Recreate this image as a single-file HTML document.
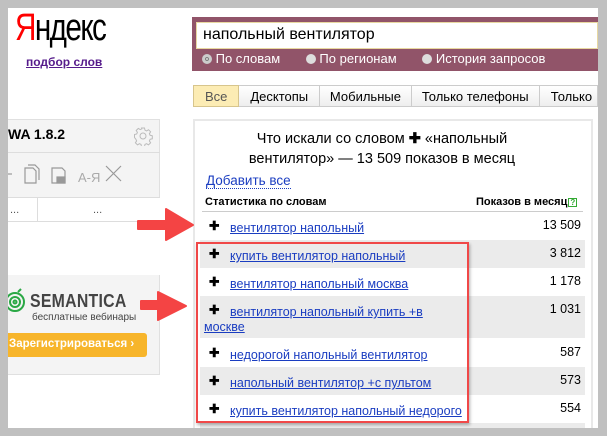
<!DOCTYPE html>
<html><head><meta charset="utf-8"><style>
*{margin:0;padding:0;box-sizing:border-box}
body{width:607px;height:436px;background:#c0c0c0;position:relative;overflow:hidden;font-family:"Liberation Sans",Arial,sans-serif;font-size:13px;color:#000}
.abs{position:absolute}
a{color:#1a3dc1;text-decoration:underline}
</style></head><body>
<div class="abs" style="left:8px;top:8px;width:590px;height:420px;background:#fff"></div>
<div class="abs" style="left:15px;top:7px;font-size:38px;letter-spacing:-2px;transform:scaleX(0.78);transform-origin:left"><span style="color:#f00">Я</span>ндекс</div>
<div class="abs" style="left:26px;top:55px;font-size:12px;font-weight:bold;color:#551a8b;text-decoration:underline">подбор слов</div>
<div class="abs" style="left:192px;top:17px;width:406px;height:54px;background:#915469"></div>
<div class="abs" style="left:196px;top:22px;width:402px;height:27px;background:#fff;border:1px solid #e8d8a0;font-size:16px;padding:3px 6px;color:#000">напольный вентилятор</div>
<div class="abs" style="left:202px;top:51px;color:#fff;font-size:13px;white-space:nowrap">
<span style="display:inline-block;width:10px;height:10px;border-radius:50%;background:#ddd;border:3px solid #ccc;box-shadow:inset 0 0 0 1px #777;vertical-align:-1px"></span> По словам
<span style="display:inline-block;width:10px;height:10px;border-radius:50%;background:#ddd;margin-left:22px;vertical-align:-1px"></span> По регионам
<span style="display:inline-block;width:10px;height:10px;border-radius:50%;background:#ddd;margin-left:22px;vertical-align:-1px"></span> История запросов</div>
<div class="abs" style="left:193px;top:85px;height:22px;display:flex;font-size:13px;white-space:nowrap;width:405px;overflow:hidden">
<div style="width:48px;background:#fcecb4;border:1px solid #d7c58c;text-align:center;padding-top:3px;color:#555">Все</div>
<div style="width:84px;background:linear-gradient(#fff,#eee);border:1px solid #ccc;border-left:0;text-align:center;padding-top:3px">Десктопы</div>
<div style="width:95px;background:linear-gradient(#fff,#eee);border:1px solid #ccc;border-left:0;text-align:center;padding-top:3px">Мобильные</div>
<div style="width:133px;background:linear-gradient(#fff,#eee);border:1px solid #ccc;border-left:0;text-align:center;padding-top:3px">Только телефоны</div>
<div style="width:60px;background:linear-gradient(#fff,#eee);border:1px solid #ccc;border-left:0;padding:3px 0 0 11px">Только</div></div>
<div class="abs" style="left:193px;top:119px;width:400px;height:315px;border:2px solid #e8e8e8;background:#fff"></div>
<div class="abs" style="left:196px;top:129px;width:394px;text-align:center;font-size:14.5px;line-height:20px;padding-right:22px">Что искали со словом <b>✚</b> «напольный<br>вентилятор» — 13 509 показов в месяц</div>
<div class="abs" style="left:206px;top:173px;font-size:13.5px;color:#1a3dc1;border-bottom:1px dotted #1a3dc1;line-height:15px">Добавить все</div>
<div class="abs" style="left:205px;top:196px;font-size:11px;font-weight:bold">Статистика по словам</div>
<div class="abs" style="left:476px;top:196px;font-size:11px;font-weight:bold">Показов в месяц<span style="display:inline-block;width:9px;height:9px;border:1px solid #3a3;color:#3a3;font-size:8px;line-height:8px;text-align:center;margin-left:1px">?</span></div>
<div class="abs" style="left:202px;top:211px;width:381px;height:1px;background:#ccc"></div>
<div class="abs" style="left:200px;top:212px;width:385px;font-size:12.5px">
<div style="height:28px;position:relative"><b class="abs" style="left:9px;top:6px">✚</b><a class="abs" style="left:30px;top:9px">вентилятор напольный</a><span class="abs" style="right:4px;top:6px">13 509</span></div>
<div style="height:28px;position:relative;background:#ebebeb"><b class="abs" style="left:9px;top:6px">✚</b><a class="abs" style="left:30px;top:9px">купить вентилятор напольный</a><span class="abs" style="right:4px;top:6px">3 812</span></div>
<div style="height:28px;position:relative"><b class="abs" style="left:9px;top:6px">✚</b><a class="abs" style="left:30px;top:9px">вентилятор напольный москва</a><span class="abs" style="right:4px;top:6px">1 178</span></div>
<div style="height:42px;position:relative;background:#ebebeb"><b class="abs" style="left:9px;top:6px">✚</b><a class="abs" style="left:4px;top:9px;text-indent:26px;width:240px;line-height:15px">вентилятор напольный купить +в москве</a><span class="abs" style="right:4px;top:6px">1 031</span></div>
<div style="height:29px;position:relative"><b class="abs" style="left:9px;top:7px">✚</b><a class="abs" style="left:30px;top:10px">недорогой напольный вентилятор</a><span class="abs" style="right:4px;top:7px">587</span></div>
<div style="height:28px;position:relative;background:#ebebeb"><b class="abs" style="left:9px;top:6px">✚</b><a class="abs" style="left:30px;top:9px">напольный вентилятор +с пультом</a><span class="abs" style="right:4px;top:6px">573</span></div>
<div style="height:28px;position:relative"><b class="abs" style="left:9px;top:6px">✚</b><a class="abs" style="left:30px;top:9px">купить вентилятор напольный недорого</a><span class="abs" style="right:4px;top:6px">554</span></div>
<div style="height:10px;background:#ebebeb"></div>
</div>
<div class="abs" style="left:196px;top:242px;width:273px;height:181px;border:2px solid #f04848;box-shadow:1px 2px 3px rgba(0,0,0,.3)"></div>
<div class="abs" style="left:8px;top:119px;width:152px;height:256px;background:#f4f4f4;border:1px solid #e0e0e0;border-left:0"></div>
<div class="abs" style="left:8px;top:126px;font-size:14px;font-weight:bold">WA 1.8.2</div>
<svg class="abs" style="left:133px;top:126px" width="20" height="20" viewBox="0 0 20 20" fill="none" stroke="#bbb" stroke-width="1"><path d="M8.5 2h3l.5 2.2 1.6.7 1.9-1.2 2.1 2.1-1.2 1.9.7 1.6 2.2.5v3l-2.2.5-.7 1.6 1.2 1.9-2.1 2.1-1.9-1.2-1.6.7-.5 2.2h-3l-.5-2.2-1.6-.7-1.9 1.2-2.1-2.1 1.2-1.9-.7-1.6L1.5 11.5v-3l2.2-.5.7-1.6-1.2-1.9 2.1-2.1 1.9 1.2 1.6-.7z"/><circle cx="10" cy="10" r="3"/></svg>
<div class="abs" style="left:8px;top:152px;width:152px;height:1px;background:#ddd"></div>
<svg class="abs" style="left:8px;top:160px" width="120" height="30" viewBox="0 0 120 30" fill="none" stroke="#999" stroke-width="1.2">
<path d="M0 14H4"/><path d="M17 8h8l3 3v12H17z"/><path d="M20 5h7l4 4v11"/><path d="M44 8h10l3 3v12H44z"/><rect x="49" y="17" width="8" height="6" fill="#999"/>
<text x="70" y="22" font-size="13" fill="#aaa" stroke="none" font-family="Liberation Sans">A-Я</text><path d="M98 6l15 15M113 6L98 21"/></svg>
<div class="abs" style="left:8px;top:197px;width:152px;height:25px;border-top:1px solid #ddd;border-bottom:1px solid #ddd;background:#fff"></div>
<div class="abs" style="left:37px;top:197px;width:1px;height:25px;background:#ddd"></div>
<div class="abs" style="left:10px;top:204px;color:#555;font-size:11px">...</div>
<div class="abs" style="left:93px;top:204px;color:#555;font-size:11px">...</div>
<div class="abs" style="left:8px;top:222px;width:152px;height:53px;background:#fff"></div>
<svg class="abs" style="left:5px;top:288px" width="20" height="26" viewBox="0 0 20 26" fill="none" stroke="#2aa845" stroke-width="2"><circle cx="10" cy="14" r="9"/><circle cx="10" cy="14" r="5"/><circle cx="10" cy="14" r="1.5"/><path d="M13 4l3-3"/></svg>
<div class="abs" style="left:30px;top:291px;font-size:18px;font-weight:bold;color:#444;letter-spacing:0.3px;transform:scaleX(0.88);transform-origin:left">SEMANTICA</div>
<div class="abs" style="left:32px;top:312px;font-size:10px;color:#444">бесплатные вебинары</div>
<div class="abs" style="left:8px;top:333px;width:139px;height:24px;background:#f7b52b;border-radius:0 3px 3px 0;color:#fff;font-weight:bold;font-size:11.5px;padding:5px 0 0 1px">Зарегистрироваться ›</div>
<svg class="abs" style="left:130px;top:204px" width="70" height="40"><path d="M8 17H36V5L63 21L36 36V25H8z" fill="#f44444" stroke="#f44444" stroke-width="2" stroke-linejoin="round"/></svg>
<svg class="abs" style="left:133px;top:289px" width="65" height="36"><path d="M8 12H25V3L53 17L25 31V20H8z" fill="#f44444" stroke="#f44444" stroke-width="2" stroke-linejoin="round"/></svg>
<div class="abs" style="left:0;top:0;width:8px;height:436px;background:#c0c0c0"></div>
<div class="abs" style="left:598px;top:0;width:9px;height:436px;background:#c0c0c0"></div>
<div class="abs" style="left:0;top:428px;width:607px;height:8px;background:#c0c0c0"></div>
</body></html>
